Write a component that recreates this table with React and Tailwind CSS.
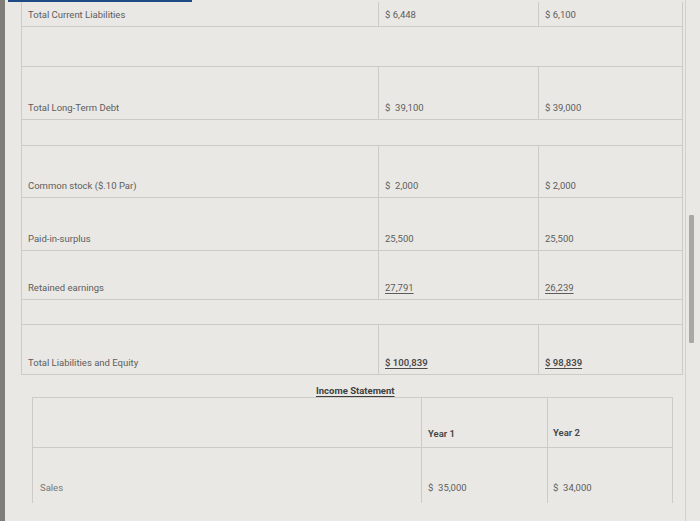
import React from "react";

const balanceRows = [
  { label: "Total Current Liabilities", a: "$ 6,448", b: "$ 6,100", h: "h-[25px]" },
  { blank: true, h: "h-[40px]" },
  { label: "Total Long-Term Debt", a: "$  39,100", b: "$ 39,000", h: "h-[53px]" },
  { blank: true, h: "h-[26px]" },
  { label: "Common stock ($.10 Par)", a: "$  2,000", b: "$ 2,000", h: "h-[52px]" },
  { label: "Paid-in-surplus", a: "25,500", b: "25,500", h: "h-[53px]" },
  { label: "Retained earnings", a: "27,791", b: "26,239", h: "h-[49px]", under: true },
  { blank: true, h: "h-[25px]" },
  { label: "Total Liabilities and Equity", a: "$ 100,839", b: "$ 98,839", h: "h-[50px]", under: true, bold: true },
];

const Row = ({ r }) => {
  if (r.blank) {
    return <div className={`${r.h} border-b border-[#cdcbc6]`} />;
  }
  const val = `pl-[6px] pb-[5px] flex items-end whitespace-pre ${r.under ? "underline underline-offset-2" : ""} ${r.bold ? "font-semibold text-[#4a4a4a]" : ""}`;
  return (
    <div className={`${r.h} flex border-b border-[#cdcbc6]`}>
      <div className="w-[357px] border-r border-[#cdcbc6] pl-[6px] pb-[5px] flex items-end">{r.label}</div>
      <div className={`w-[160px] border-r border-[#cdcbc6] ${val}`}>{r.a}</div>
      <div className={`flex-1 ${val}`}>{r.b}</div>
    </div>
  );
};

export default function App() {
  return (
    <div
      className="w-[700px] h-[521px] overflow-hidden flex bg-[#e9e8e4] text-[9.5px] leading-[12px] text-[#5d5d5d]"
      style={{ fontFamily: "Roboto, 'Liberation Sans', sans-serif" }}
    >
      <div className="w-[5px] bg-[#807e79]" />
      <div className="w-[680px] flex flex-col">
        <div className="ml-[3px] w-[184px] h-[2px] bg-[#1f4a86]" />
        <div className="ml-[16px] w-[662px] border-x border-[#cdcbc6]">
          {balanceRows.map((r, i) => (
            <Row key={i} r={r} />
          ))}
        </div>
        <div className="h-[22px] pl-[311px] flex items-end">
          <span className="font-bold text-[#3f3f3f] underline underline-offset-2">Income Statement</span>
        </div>
        <div className="ml-[27px] w-[641px] border-x border-t border-[#cdcbc6]">
          <div className="h-[50px] flex border-b border-[#cdcbc6]">
            <div className="w-[389px] border-r border-[#cdcbc6]" />
            <div className="w-[126px] border-r border-[#cdcbc6] pl-[6px] pb-[7px] flex items-end font-semibold text-[#444]">Year 1</div>
            <div className="flex-1 pl-[5px] pb-[8px] flex items-end font-semibold text-[#444]">Year 2</div>
          </div>
          <div className="h-[55px] flex">
            <div className="w-[389px] border-r border-[#cdcbc6] pl-[7px] pb-[9px] flex items-end text-[#777]">Sales</div>
            <div className="w-[126px] border-r border-[#cdcbc6] pl-[6px] pb-[9px] flex items-end whitespace-pre">$  35,000</div>
            <div className="flex-1 pl-[5px] pb-[9px] flex items-end whitespace-pre">$  34,000</div>
          </div>
        </div>
      </div>
      <div className="flex-1 border-l border-[#d3d1cc] pt-[215px] pl-[3px]">
        <div className="w-[5px] h-[128px] bg-[#a9a8a5] rounded-[1px]" />
      </div>
    </div>
  );
}
